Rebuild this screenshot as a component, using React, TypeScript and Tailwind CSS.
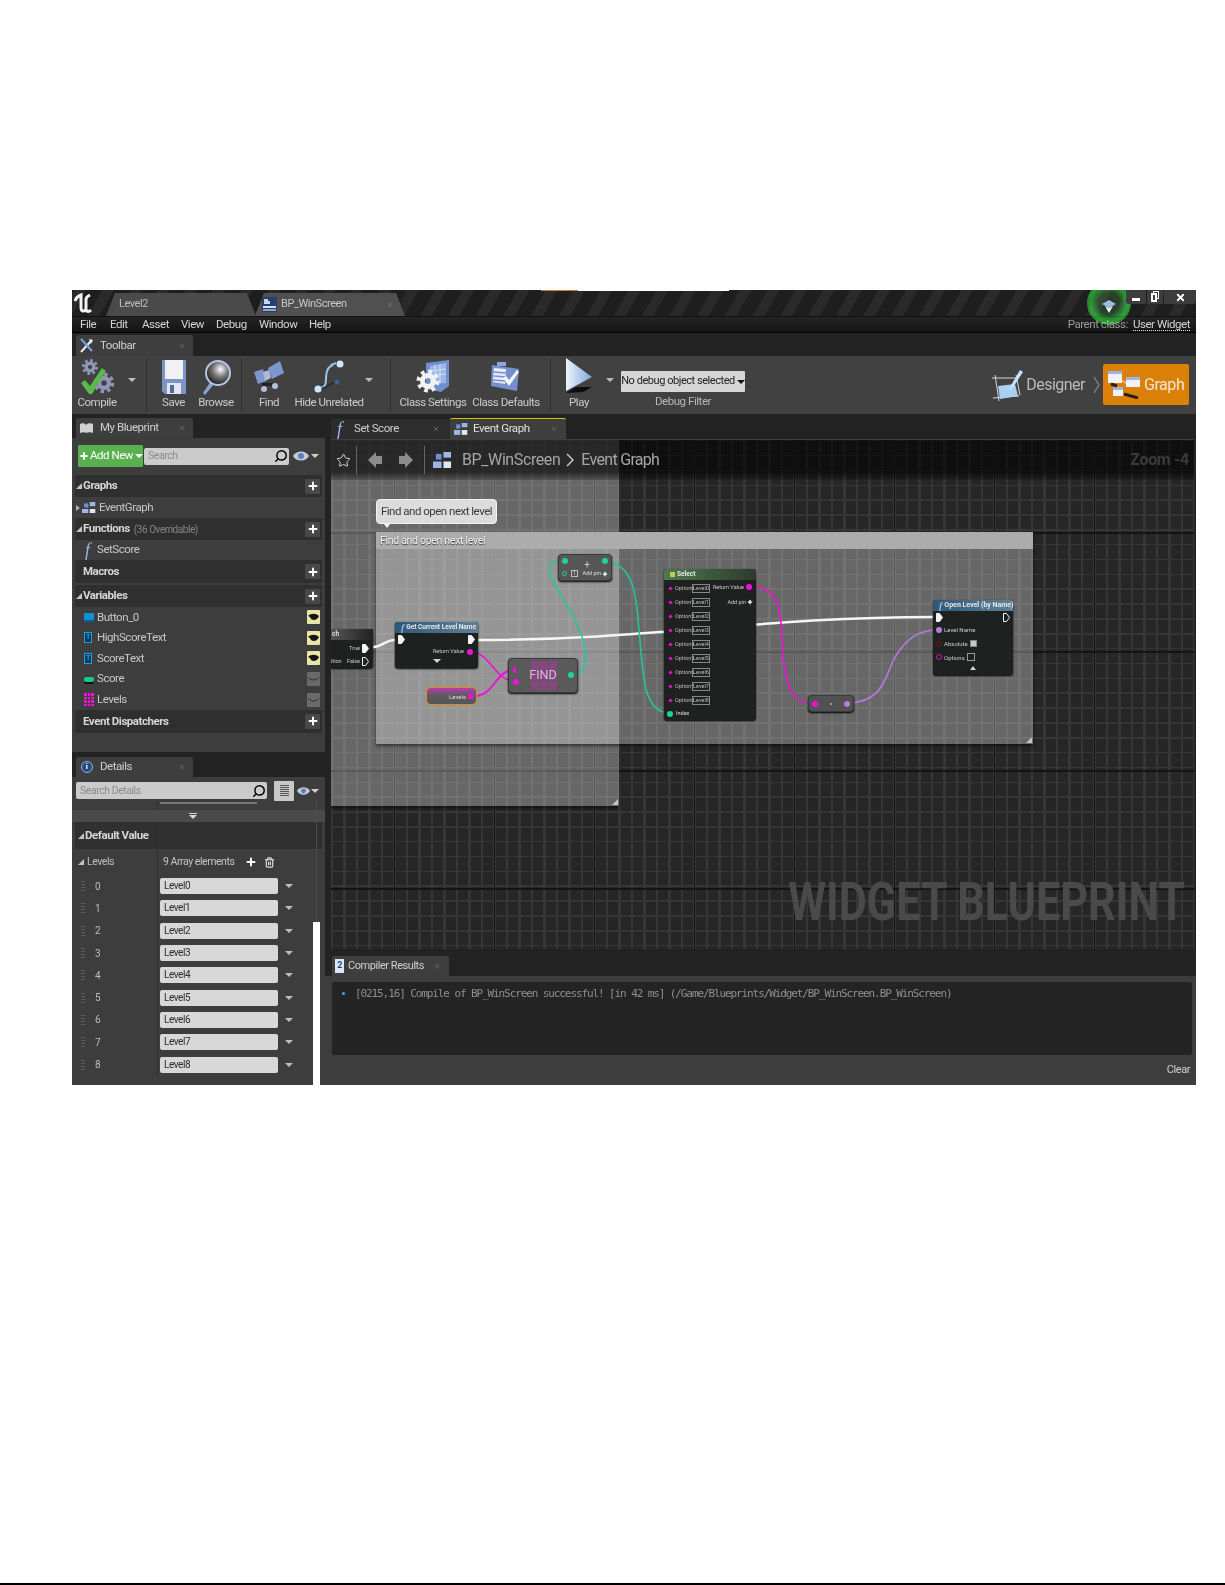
import { Star, Trash2, Search, X, Plus } from 'lucide-react';

function Gear({ cx, cy, r, fill }: { cx: number; cy: number; r: number; fill: string }) {
  const c = 2 * Math.PI * (r * 0.95);
  return (
    <g>
      <circle cx={cx} cy={cy} r={r * 0.95} fill="none" stroke={fill} strokeWidth={r * 0.4} strokeDasharray={`${c / 16} ${c / 16}`} />
      <circle cx={cx} cy={cy} r={r * 0.55} fill="none" stroke={fill} strokeWidth={r * 0.5} />
    </g>
  );
}

function UeLogo() {
  return (
    <svg width="18" height="22" viewBox="0 0 18 22" fill="none" stroke="#f4f4f4" strokeWidth="3">
      <path d="M1 8C2 5 4 3 7 2V15C7 18 9 19 12 17" />
      <path d="M16 2C14 3 12 4 12 6V17C13 19 15 19 17 17" />
    </svg>
  );
}

function WinIcon() {
  return (
    <svg width="15" height="15" viewBox="0 0 15 15">
      <rect width="15" height="15" fill="#26406e" />
      <rect x="1" y="9" width="13" height="2" fill="#d8e0ee" />
      <rect x="1" y="12" width="13" height="2" fill="#8aa4d0" />
      <path d="M2 2h4v2h2v3H2z" fill="#cdd6e6" />
    </svg>
  );
}

function Wrench() {
  return (
    <svg width="15" height="15" viewBox="0 0 15 15" fill="none">
      <path d="M2 14 12 3" stroke="#e8eef8" strokeWidth="2" />
      <path d="M2 1l11 12" stroke="#7fa5dc" strokeWidth="2" />
      <path d="M10 1l4 1-2 4z" fill="#e8eef8" />
    </svg>
  );
}

function CompileIcon() {
  return (
    <svg width="36" height="38" viewBox="0 0 36 38">
      <Gear cx={11} cy={9} r={7} fill="#8f96b6" />
      <Gear cx={25} cy={25} r={9} fill="#8f96b6" />
      <path d="M2 25l4-3 5 6L23 10l4 3-14 23h-3z" fill="#58b84e" />
    </svg>
  );
}

function SaveIcon() {
  return (
    <svg width="26" height="36" viewBox="0 0 26 36">
      <path d="M1 1h24v34H4l-3-3z" fill="#7d94c8" />
      <rect x="4" y="1" width="18" height="19" fill="#f1f1f4" />
      <rect x="6" y="24" width="14" height="11" fill="#e4e6ee" />
      <rect x="9" y="26" width="4" height="8" fill="#5a6a94" />
    </svg>
  );
}

function BrowseIcon() {
  return (
    <svg width="30" height="36" viewBox="0 0 30 36">
      <defs>
        <radialGradient id="lens" cx="0.6" cy="0.35" r="0.7">
          <stop offset="0" stopColor="#ffffff" />
          <stop offset="0.45" stopColor="#777777" />
          <stop offset="1" stopColor="#111111" />
        </radialGradient>
      </defs>
      <path d="M2 34l8-12 3 3-9 11z" fill="#8ba3d4" />
      <circle cx="17" cy="14" r="12" fill="url(#lens)" stroke="#b6c6e6" strokeWidth="2" />
    </svg>
  );
}

function FindIcon() {
  return (
    <svg width="32" height="34" viewBox="0 0 32 34">
      <path d="M1 12l9-3 3 12-8 3zM15 8l12-7 4 12-12 6z" fill="#7c97d0" />
      <path d="M10 12l6-2 2 8-6 3z" fill="#aebbd8" />
      <rect x="9" y="23" width="14" height="3" fill="#222" />
      <circle cx="11" cy="29" r="3" fill="#b4bfd8" />
      <circle cx="22" cy="26" r="3" fill="#b4bfd8" />
    </svg>
  );
}

function HideIcon() {
  return (
    <svg width="32" height="34" viewBox="0 0 32 34" fill="none">
      <path d="M6 28c6 0 7-3 7-10 0-8 3-13 10-15" stroke="#9dc4e4" strokeWidth="2" />
      <path d="M7 29c8-1 9-6 17-7" stroke="#2b2f38" strokeWidth="2" />
      <circle cx="27" cy="4" r="3.5" fill="#cfe6fa" />
      <circle cx="5" cy="29" r="3.5" fill="#cfe6fa" />
      <circle cx="24" cy="22" r="2.5" fill="#3f5f8e" />
      <path d="M17 6l2-3 1 4z" fill="#9dc4e4" />
    </svg>
  );
}

function ClassSettingsIcon() {
  return (
    <svg width="34" height="34" viewBox="0 0 34 34">
      <path d="M10 3l23-3v26l-8 6-15-3z" fill="#6f8fd0" />
      <path d="M14 6l16-3v20l-16 1z" fill="#9db6e6" />
      <path d="M19 5v18M24 4v19M14 11l16-2M14 16l16-2" stroke="#dfe8f8" strokeWidth="0.8" />
      <Gear cx={12} cy={21} r={10} fill="#f2f2f2" />
    </svg>
  );
}

function ClassDefaultsIcon() {
  return (
    <svg width="30" height="32" viewBox="0 0 30 32">
      <path d="M1 4l27 4-2 22L0 25z" fill="#7590cc" />
      <path d="M3 7l12 1-1 15-12-2z" fill="#e9ecf4" />
      <path d="M3 11l12 1M3 15l12 1M2 19l12 1" stroke="#7590cc" strokeWidth="1.4" />
      <rect x="6" y="1" width="9" height="4" fill="#8ea6d8" />
      <path d="M12 17l3-2 3 4 8-10 2 2-10 14z" fill="#f5f5f5" />
    </svg>
  );
}

function PlayIcon() {
  return (
    <svg width="28" height="38" viewBox="0 0 28 38">
      <defs>
        <linearGradient id="play" x1="0" y1="0" x2="1" y2="0">
          <stop offset="0" stopColor="#eef4fc" />
          <stop offset="1" stopColor="#7fa6dc" />
        </linearGradient>
      </defs>
      <path d="M1 0l26 19L1 33z" fill="url(#play)" />
      <path d="M1 35l10-6h16l-9 5z" fill="#0d0d0d" />
    </svg>
  );
}

function DesignerIcon() {
  return (
    <svg width="32" height="36" viewBox="0 0 32 36" fill="none">
      <path d="M1 11l24 0M4 8l4 26M2 31l26-2M25 8l4 20" stroke="#d8d8d8" strokeWidth="1" />
      <path d="M7 19l17-2 3 12-18 3z" fill="#a9d0f2" />
      <path d="M19 20L29 3l3 2-11 17-4 1z" fill="#c8e2fb" />
    </svg>
  );
}

function GraphIcon() {
  return (
    <svg width="34" height="28" viewBox="0 0 34 28">
      <path d="M12 8l7 5M10 18l3 4" stroke="#e6e6e6" strokeWidth="1" />
      <rect x="0" y="0" width="14" height="12" fill="#f0f3fa" />
      <rect x="0" y="0" width="14" height="3" fill="#9db6e6" />
      <rect x="18" y="6" width="14" height="10" fill="#f0f3fa" />
      <rect x="18" y="6" width="14" height="3" fill="#9db6e6" />
      <rect x="5" y="16" width="10" height="9" fill="#f0f3fa" />
      <rect x="5" y="16" width="10" height="3" fill="#9db6e6" />
      <path d="M3 13l6 2M16 23l14 4" stroke="#2a2018" strokeWidth="3" />
    </svg>
  );
}

function GraphGlyph({ size = 14 }: { size?: number }) {
  return (
    <svg width={size} height={size * 0.85} viewBox="0 0 20 17" fill="#9db6e6">
      <rect x="0" y="10" width="9" height="7" />
      <rect x="11" y="0" width="8" height="6" />
      <rect x="11" y="10" width="8" height="7" fill="#dfe8f8" />
      <rect x="3" y="2" width="6" height="6" fill="#6f8fd0" />
    </svg>
  );
}

function FnGlyph({ cls }: { cls: string }) {
  return <span className={`[font-family:'Liberation_Serif',serif] italic text-[#9db6e6] ${cls}`}>f</span>;
}

function Caret({ cls = 'border-t-[#bdbdbd]' }: { cls?: string }) {
  return <span className={`inline-block w-0 h-0 border-x-[4px] border-x-transparent border-t-[4px] ${cls}`} />;
}

function Corner() {
  return <span className="inline-block w-0 h-0 border-l-[6px] border-l-transparent border-b-[6px] border-b-[#c4c4c4]" />;
}

function Eye({ small }: { small?: boolean }) {
  return (
    <svg width={small ? 13 : 16} height="10" viewBox="0 0 16 10">
      <path d="M0 5c3-6 13-6 16 0-3 6-13 6-16 0z" fill="#c4cad6" />
      <circle cx="8" cy="5" r="3" fill="#5d7fc0" />
    </svg>
  );
}

function PanelTab({ icon, label, cls }: { icon: React.ReactNode; label: string; cls: string }) {
  return (
    <div className={`flex items-center bg-[#3e3e3e] rounded-t-[2px] text-[11.5px] text-[#cfcfcf] ${cls}`}>
      <span className="flex w-[17px] justify-center">{icon}</span>
      <span className="ml-[5px] flex-1">{label}</span>
      <X className="w-[8px] h-[8px] mr-[7px] text-[#5f5f5f]" strokeWidth={3} />
    </div>
  );
}

function ToolItem({ icon, label, cls }: { icon: React.ReactNode; label: string; cls: string }) {
  return (
    <div className={`flex flex-col items-center h-full pt-[2px] ${cls}`}>
      <div className="h-[37px] flex items-center justify-center">{icon}</div>
      <div className="text-[11.5px] leading-[14px] whitespace-nowrap text-[#cbcbcb]">{label}</div>
    </div>
  );
}

function ToolCaret({ cls }: { cls: string }) {
  return (
    <div className={`flex items-center justify-center h-full pb-[10px] ${cls}`}>
      <Caret />
    </div>
  );
}

function ToolSep({ cls }: { cls: string }) {
  return <div className={`w-[1px] h-[54px] self-center bg-[#2e2e2e] ${cls}`} />;
}

function SectionHead({ label, sub, arrow = true, cls }: { label: string; sub?: string; arrow?: boolean; cls: string }) {
  return (
    <div className={`flex items-center bg-[#2f2f2f] mx-[3px] pl-[1px] pr-[2px] ${cls}`}>
      {arrow ? <Corner /> : <span className="w-[6px]" />}
      <span className="ml-[1px] text-[11.5px] font-bold text-[#d6d6d6]">{label}</span>
      {sub && <span className="ml-[4px] text-[10px] text-[#858585]">{sub}</span>}
      <span className="ml-auto flex items-center justify-center w-[15px] h-[15px] bg-[#484848] rounded-[1px]">
        <Plus className="w-[12px] h-[12px] text-white" strokeWidth={4} />
      </span>
    </div>
  );
}

function VarRow({ icon, label, on }: { icon: React.ReactNode; label: string; on: boolean }) {
  return (
    <div className="flex items-center h-[20.6px] pl-[12px] pr-[5px] text-[11.5px] text-[#c8c8c8]">
      <span className="flex w-[13px] justify-start">{icon}</span>
      <span>{label}</span>
      {on ? (
        <span className="ml-auto flex items-center justify-center w-[13px] h-[14px] bg-[#e9e5a6] rounded-[1px]">
          <svg width="11" height="8" viewBox="0 0 11 8">
            <path d="M0 3c3-3 8-3 11 0-2 5-8 5-9 1z" fill="#151515" />
          </svg>
        </span>
      ) : (
        <span className="ml-auto flex items-center justify-center w-[13px] h-[14px] bg-[#6a6a6a] rounded-[1px]">
          <svg width="11" height="6" viewBox="0 0 11 6" fill="none">
            <path d="M0 1c3 4 8 4 11 0" stroke="#2b2b2b" strokeWidth="1" />
          </svg>
        </span>
      )}
    </div>
  );
}

const levels = ['0', '1', '2', '3', '4', '5', '6', '7', '8'];
const nineCells = [1, 2, 3, 4, 5, 6, 7, 8, 9];
const twelveCells = [1, 2, 3, 4, 5, 6, 7, 8, 9, 10, 11, 12];

function LevelRow({ n }: { n: string }) {
  return (
    <div className="flex h-[22.3px] items-center">
      <div className="flex w-[85px] items-center h-full">
        <span className="ml-[9px] w-[4px] h-[12px] [background-image:radial-gradient(#5c5c5c_0.6px,transparent_0.7px)] [background-size:2px_3px]" />
        <span className="ml-[10px] text-[10px] text-[#bdbdbd]">{n}</span>
      </div>
      <div className="flex items-center h-full border-l border-[#2e2e2e] pl-[2px]">
        <div className="w-[118px] h-[16px] bg-[#d8d8d8] rounded-[2px] pl-[4px] text-[10px] leading-[16px] text-[#2c2c2c]">Level{n}</div>
        <span className="ml-[7px] flex"><Caret /></span>
      </div>
    </div>
  );
}

function LeftPanel() {
  return (
    <div className="w-[253px] flex flex-col">
      <div className="h-[24px] flex items-end bg-[#232323] pl-[4px]">
        <PanelTab cls="w-[117px] h-[20px] pl-[2px]" label="My Blueprint" icon={
          <svg width="13" height="11" viewBox="0 0 13 11">
            <path d="M0 1c2-1 5-1 6 1 1-2 5-2 7-1v9c-2-1-5-1-7 0-1-1-4-1-6 0z" fill="#d0d0d0" />
          </svg>
        } />
      </div>
      <div className="h-[314px] bg-[#3d3d3d]">
        <div className="flex items-center h-[37px] pl-[6px] pb-[8px] pt-[7px]">
          <div className="flex items-center w-[65px] h-[22px] bg-[#58b04f] rounded-[1px] text-white text-[11.5px] whitespace-nowrap">
            <Plus className="w-[10px] h-[10px] ml-[1px]" strokeWidth={5} />
            <span className="ml-[1px]">Add New</span>
            <span className="ml-[2px] flex"><Caret cls="border-t-white" /></span>
          </div>
          <div className="ml-[1px] flex items-center w-[145px] h-[17px] bg-[#cbcbcb] rounded-[2px] pl-[4px] text-[10.5px] text-[#8b8b8b]">
            Search
            <Search className="ml-auto mr-[1px] w-[14px] h-[14px] text-black -scale-x-100" strokeWidth={2.5} />
          </div>
          <span className="ml-[4px] flex items-center gap-[2px]"><Eye /><Caret cls="border-t-[#d0d0d0]" /></span>
        </div>
        <SectionHead label="Graphs" cls="h-[22px]" />
        <div className="flex items-center h-[21px] pl-[4px] text-[11.5px] text-[#c8c8c8]">
          <span className="w-0 h-0 border-y-[3.5px] border-y-transparent border-l-[4px] border-l-[#b0b0b0]" />
          <span className="ml-[2px] flex"><GraphGlyph /></span>
          <span className="ml-[3px]">EventGraph</span>
        </div>
        <SectionHead label="Functions" sub="(36 Overridable)" cls="h-[22px]" />
        <div className="flex items-center h-[20px] pl-[13px] text-[11.5px] text-[#c8c8c8]">
          <FnGlyph cls="text-[18px] leading-none w-[12px]" />
          <span>SetScore</span>
        </div>
        <SectionHead label="Macros" arrow={false} cls="h-[23px]" />
        <SectionHead label="Variables" cls="h-[22px] mt-[2px]" />
        <VarRow on label="Button_0" icon={<span className="block w-[10px] h-[9px] bg-[#0f8fd8] border-b-2 border-[#0a5f90]" />} />
        <VarRow on label="HighScoreText" icon={<span className="flex items-center justify-center w-[8px] h-[11px] border border-[#19a0e8] text-[7px] font-bold leading-none text-[#19a0e8] bg-[#123a55]">T</span>} />
        <VarRow on label="ScoreText" icon={<span className="flex items-center justify-center w-[8px] h-[11px] border border-[#19a0e8] text-[7px] font-bold leading-none text-[#19a0e8] bg-[#123a55]">T</span>} />
        <VarRow on={false} label="Score" icon={<span className="block w-[10px] h-[5px] bg-[#19c88e] rounded-[2px] shadow-[0_2px_0_#111]" />} />
        <VarRow on={false} label="Levels" icon={
          <span className="grid grid-cols-3 gap-[1px] w-[10px]">
            {twelveCells.map((c) => (
              <span key={c} className="block h-[2.5px] bg-[#f010d8]" />
            ))}
          </span>
        } />
        <SectionHead label="Event Dispatchers" arrow={false} cls="h-[23px]" />
      </div>
      <div className="h-[25px] flex items-end bg-[#232323] pl-[4px]">
        <PanelTab cls="w-[117px] h-[20px] pl-[2px]" label="Details" icon={
          <span className="flex items-center justify-center w-[12px] h-[12px] rounded-full border border-[#8fb0ea] bg-[#2b4a80] text-[8px] font-bold text-white">i</span>
        } />
      </div>
      <div className="relative flex-1 bg-[#3d3d3d] overflow-hidden">
        <div className="flex items-center h-[25px] pl-[4px] pt-[5px] pb-[3px]">
          <div className="flex items-center w-[191px] h-[17px] bg-[#cbcbcb] rounded-[2px] pl-[4px] text-[10.5px] text-[#8b8b8b]">
            Search Details
            <Search className="ml-auto mr-[1px] w-[14px] h-[14px] text-black -scale-x-100" strokeWidth={2.5} />
          </div>
          <div className="ml-[7px] flex items-center justify-center w-[20px] h-[20px] bg-[#c8c8c8] rounded-[1px]">
            <span className="block w-[9px] h-[11px] [background-image:repeating-linear-gradient(#555_0,#555_1px,transparent_1px,transparent_2px)]" />
          </div>
          <span className="ml-[3px] flex items-center gap-[1px]"><Eye small /><Caret cls="border-t-[#d0d0d0]" /></span>
        </div>
        <div className="h-[20px] flex flex-col">
          <div className="h-[8px] ml-[85px] border-l border-[#2e2e2e]">
            <div className="w-[97px] h-[2px] ml-[2px] bg-[#777777]" />
          </div>
          <div className="h-[12px] bg-[#4a4a4a] flex items-center justify-center pr-[11px]">
            <div className="flex flex-col items-center">
              <span className="block w-[8px] h-[1px] bg-[#d8d8d8] mb-[1px]" />
              <Caret cls="border-t-[#d8d8d8]" />
            </div>
          </div>
        </div>
        <div className="flex h-[27px] mx-[3px] bg-[#303030] items-center">
          <div className="w-[82px] flex items-center pl-[3px] h-full border-r border-[#262626]">
            <Corner />
            <span className="ml-[1px] text-[11.5px] font-bold text-[#d6d6d6] whitespace-nowrap">Default Value</span>
          </div>
        </div>
        <div className="flex h-[26px] items-center">
          <div className="w-[85px] pl-[6px] flex items-center text-[10.5px] text-[#bdbdbd] h-full">
            <Corner />
            <span className="ml-[3px]">Levels</span>
          </div>
          <div className="flex items-center border-l border-[#2e2e2e] h-full pl-[5px] text-[10.5px] text-[#c4c4c4]">
            9 Array elements
            <Plus className="ml-[11px] w-[12px] h-[12px] text-white" strokeWidth={4} />
            <Trash2 className="ml-[7px] w-[11px] h-[11px] text-[#e0e0e0]" strokeWidth={2.5} />
          </div>
        </div>
        {levels.map((n) => (
          <LevelRow key={n} n={n} />
        ))}
        <div className="absolute right-[5px] top-[145px] bottom-0 w-[7px] bg-white" />
        <div className="absolute right-[8px] top-[23px] h-[122px] w-[1px] bg-[#4c4c4c]" />
      </div>
    </div>
  );
}

function Pin({ cls }: { cls: string }) {
  return <span className={`block w-[6px] h-[6px] rounded-full ${cls}`} />;
}

function ExecPin({ filled = true }: { filled?: boolean }) {
  return (
    <svg width="7" height="9" viewBox="0 0 7 9">
      <path d="M0.5 0.5h3l3 4-3 4h-3z" fill={filled ? '#f4f4f4' : 'none'} stroke="#f4f4f4" strokeWidth="1" />
    </svg>
  );
}

function NodeHead({ label, cls, glyph }: { label: string; cls: string; glyph: React.ReactNode }) {
  return (
    <div className={`flex items-center h-[11px] rounded-t-[3px] pl-[6px] text-[6.5px] font-bold text-[#e8e8e8] ${cls}`}>
      {glyph}
      <span className="ml-[2px] whitespace-nowrap">{label}</span>
    </div>
  );
}

const options = ['0', '1', '2', '3', '4', '5', '6', '7', '8'];

function GraphCanvas() {
  return (
    <div className="relative h-[509px] overflow-hidden bg-[#262626] tracking-normal [background-image:repeating-linear-gradient(90deg,transparent_0,transparent_63px,#141414_63px,#141414_64px,transparent_64px,transparent_100px),repeating-linear-gradient(transparent_0,transparent_92px,#141414_92px,#141414_94px,transparent_94px,transparent_118.8px),repeating-linear-gradient(90deg,#363636_0,#363636_2px,transparent_2px,transparent_12.5px),repeating-linear-gradient(#363636_0,#363636_1.5px,transparent_1.5px,transparent_14.85px)]">
      {/* comment boxes */}
      <div className="absolute left-0 top-0 w-[288px] h-[366px] bg-white/30 shadow-[0_2px_3px_rgba(0,0,0,0.6)]">
        <span className="absolute right-[1px] bottom-[1px] flex"><Corner /></span>
      </div>
      <div className="absolute left-[45px] top-[92px] w-[657px] h-[212px] bg-white/30 shadow-[0_2px_3px_rgba(0,0,0,0.5)]">
        <div className="h-[17px] bg-[#acacac] pl-[4px] text-[10.5px] tracking-[-0.3px] leading-[17px] text-[#f4f4f4] [text-shadow:0_1px_1px_#333]">Find and open next level</div>
        <span className="absolute right-[1px] bottom-[1px] flex"><Corner /></span>
      </div>
      <div className="absolute left-[45px] top-[59px] w-[121px] h-[25px] rounded-[4px] border border-[#f2f2f2] bg-[#dcdcdc] text-center text-[11.5px] tracking-[-0.5px] leading-[23px] text-[#3a3a3a] whitespace-nowrap">
        Find and open next level
        <span className="absolute left-[6px] top-[23px] w-0 h-0 border-x-[4px] border-x-transparent border-t-[5px] border-t-[#efefef]" />
      </div>

      {/* wires */}
      <svg className="absolute left-0 top-0" width="863" height="509" viewBox="331 440 863 509" fill="none">
        <path d="M373 647C382 647 385 640 395 640" stroke="#f6f6f6" strokeWidth="2.5" />
        <path d="M478 640C650 640 760 617 933 617" stroke="#f6f6f6" strokeWidth="2.5" />
        <path d="M471 652C490 652 495 681 514 681" stroke="#f010d8" strokeWidth="1.6" />
        <path d="M474 696C495 696 495 670 514 670" stroke="#f010d8" strokeWidth="2" />
        <path d="M571 675C590 675 590 650 575 620C560 590 548 580 550 567C551 560 558 560 564 560" stroke="#1fc9a0" strokeWidth="1.5" />
        <path d="M604 560C640 565 636 610 640 640C643 680 645 713 670 713" stroke="#1fc9a0" strokeWidth="1.5" />
        <path d="M756 587C790 590 778 640 785 670C790 700 800 703 813 703" stroke="#f010d8" strokeWidth="1.6" />
        <path d="M847 703C890 703 885 665 900 650C910 635 925 630 938 630" stroke="#b77ae0" strokeWidth="1.6" />
      </svg>

      {/* branch node, cut by the canvas edge */}
      <div className="absolute left-0 top-[189px] w-[42px] h-[39px] bg-[#1d211f] rounded-r-[3px] shadow-[0_1px_2px_#000]">
        <div className="h-[11px] bg-[linear-gradient(90deg,#555,#222)] pl-[1px] text-[6.5px] font-bold leading-[11px] text-[#ddd]">ch</div>
        <div className="flex items-center justify-end h-[14px] pr-[4px] mt-[1px] text-[5.5px] text-[#ccc] gap-[2px]">True <ExecPin /></div>
        <div className="flex items-center justify-between h-[12px] pr-[4px] text-[5.5px] text-[#ccc]"><span>ition</span><span className="flex items-center gap-[2px]">False <ExecPin filled={false} /></span></div>
      </div>

      {/* Get Current Level Name */}
      <div className="absolute left-[64px] top-[182px] w-[83px] h-[46px] bg-[#1d211f] rounded-[3px] shadow-[0_1px_2px_#000]">
        <NodeHead label="Get Current Level Name" cls="bg-[linear-gradient(90deg,#2e5877,#5d8199)]" glyph={<FnGlyph cls="text-[10px] leading-none" />} />
        <div className="flex justify-between items-center h-[12px] px-[3px]"><ExecPin /><ExecPin /></div>
        <div className="flex justify-end items-center gap-[3px] h-[11px] pr-[5px] mt-[1px] text-[5.5px] text-[#ccc]">Return Value <Pin cls="bg-[#f010d8]" /></div>
        <div className="flex justify-center h-[8px] pl-[1px] items-center"><Caret cls="border-t-[#d4d4d4]" /></div>
      </div>

      {/* Levels variable */}
      <div className="absolute left-[95px] top-[247px] w-[51px] h-[18px] rounded-[5px] border border-[#df8a10] bg-[linear-gradient(#c436b4,#5c5c5c_45%,#555)] flex items-center justify-end pr-[3px] gap-[2px] text-[6px] text-[#ddd]">
        Levels <span className="w-[5px] h-[5px] bg-[#f010d8]" />
      </div>

      {/* FIND */}
      <div className="absolute left-[177px] top-[218px] w-[70px] h-[35px] rounded-[4px] bg-[#5a5a5a] border border-[#3a3a3a] shadow-[0_1px_2px_#000]">
        <div className="absolute left-[22px] top-[2px] w-[26px] grid grid-cols-3 gap-[1px]">
          {nineCells.map((c) => (
            <span key={c} className="block h-[9px] bg-[#86467f]" />
          ))}
        </div>
        <div className="absolute inset-0 flex items-center justify-center text-[12.5px] text-[#dcb8d8]">FIND</div>
        <span className="absolute left-[4px] top-[8px] w-[3px] h-[6px] bg-[#f010d8]" />
        <span className="absolute left-[4px] top-[20px]"><Pin cls="w-[5px] h-[5px] bg-[#f010d8]" /></span>
        <span className="absolute right-[3px] top-[13px]"><Pin cls="bg-[#1fd1a0]" /></span>
      </div>

      {/* add node */}
      <div className="absolute left-[227px] top-[114px] w-[54px] h-[27px] rounded-[4px] bg-[#565656] border border-[#3a3a3a] shadow-[0_1px_2px_#000]">
        <div className="flex justify-between h-[12px] items-center px-[3px]">
          <Pin cls="w-[5px] h-[5px] bg-[#1fd1a0]" />
          <span className="text-[10px] leading-[10px] mt-[8px] ml-[4px] text-[#c8c8c8]">+</span>
          <Pin cls="w-[5px] h-[5px] bg-[#1fd1a0]" />
        </div>
        <div className="flex items-center h-[13px] px-[3px]">
          <span className="w-[5px] h-[5px] rounded-full border border-[#1fd1a0]" />
          <span className="ml-[4px] w-[7px] h-[7px] border border-[#bbb] text-[5px] leading-[5px] text-center text-[#ccc]">1</span>
          <span className="ml-auto text-[5.5px] text-[#ddd]">Add pin</span>
          <Plus className="w-[6px] h-[6px] ml-[1px] text-white" strokeWidth={5} />
        </div>
      </div>

      {/* Select */}
      <div className="absolute left-[333px] top-[129px] w-[92px] h-[151px] bg-[#1e211f] rounded-[3px] shadow-[0_1px_2px_#000]">
        <NodeHead label="Select" cls="bg-[linear-gradient(90deg,#4d7a4d,#2d3a2d)]" glyph={<span className="w-[5px] h-[5px] bg-[#c8c84a]" />} />
        <div className="relative pt-[1px]">
          {options.map((n) => (
            <div key={n} className="flex items-center h-[14px] pl-[5px] text-[5.5px] text-[#bbb]">
              <span className="w-[3px] h-[3px] rotate-45 bg-[#f010d8]" />
              <span className="ml-[3px] w-[15px]">Option{n}</span>
              <span className="ml-[2px] w-[18px] h-[9px] border border-[#888] text-center leading-[7px] text-[#bbb]">Level{n}</span>
            </div>
          ))}
          <div className="flex items-center h-[13px] pl-[3px] text-[5.5px] text-[#ddd]">
            <Pin cls="bg-[#1fd1a0]" />
            <span className="ml-[3px]">Index</span>
          </div>
          <div className="absolute right-[4px] top-[1px] flex items-center gap-[2px] h-[12px] text-[5.5px] text-[#ccc]">Return Value <Pin cls="w-[4px] h-[4px] bg-[#f010d8]" /></div>
          <div className="absolute right-[3px] top-[15px] flex items-center gap-[1px] h-[14px] text-[5.5px] text-[#ccc]">Add pin <Plus className="w-[6px] h-[6px] text-white" strokeWidth={5} /></div>
        </div>
      </div>

      {/* convert */}
      <div className="absolute left-[477px] top-[255px] w-[46px] h-[17px] rounded-[4px] bg-[#515151] border border-[#3a3a3a] shadow-[0_1px_2px_#000] flex items-center justify-between px-[3px]">
        <Pin cls="w-[5px] h-[5px] bg-[#f010d8]" />
        <span className="w-[2px] h-[2px] bg-[#bbb] rounded-full" />
        <Pin cls="w-[5px] h-[5px] bg-[#b77ae0]" />
      </div>

      {/* Open Level */}
      <div className="absolute left-[602px] top-[160px] w-[80px] h-[75px] bg-[#1d211f] rounded-[3px] shadow-[0_1px_2px_#000]">
        <NodeHead label="Open Level (by Name)" cls="bg-[linear-gradient(90deg,#2e5877,#5d8199)] text-[7px]" glyph={<FnGlyph cls="text-[10px] leading-none" />} />
        <div className="flex justify-between items-center h-[12px] px-[3px]"><ExecPin /><ExecPin filled={false} /></div>
        <div className="flex items-center h-[13.7px] pl-[3px] text-[6px] text-[#ccc]"><Pin cls="bg-[#b77ae0]" /><span className="ml-[2px]">Level Name</span></div>
        <div className="flex items-center h-[13.7px] pl-[3px] text-[6px] text-[#ccc]"><span className="w-[6px] h-[6px] rounded-full border border-[#7a1010]" /><span className="ml-[2px]">Absolute</span><span className="ml-[2px] w-[7px] h-[7px] bg-[#c8c8c8] border border-[#888]" /></div>
        <div className="flex items-center h-[13.7px] pl-[3px] text-[6px] text-[#ccc]"><span className="w-[6px] h-[6px] rounded-full border border-[#d018b8]" /><span className="ml-[2px]">Options</span><span className="ml-[2px] w-[8px] h-[8px] border border-[#999]" /></div>
        <div className="flex justify-center items-center h-[8px]"><span className="w-0 h-0 border-x-[3px] border-x-transparent border-b-[4px] border-b-[#d4d4d4]" /></div>
      </div>

      {/* breadcrumb */}
      <div className="absolute left-0 right-0 top-0 h-[40px] bg-[linear-gradient(rgba(0,0,0,0.62),rgba(0,0,0,0.62)_80%,rgba(0,0,0,0.2))] flex items-center text-[#a6a6a6]">
        <div className="flex items-center w-[26px] justify-center h-[28px] border-r border-[#666]">
          <Star className="w-[15px] h-[15px] text-[#d8d8d8]" strokeWidth={1.6} />
        </div>
        <div className="flex items-center h-[28px] w-[68px] border-r border-[#666] justify-around px-[3px]">
          <svg width="14" height="16" viewBox="0 0 14 16"><path d="M8 0L0 8l8 8v-4h6V4H8z" fill="#8c8c8c" /></svg>
          <svg width="14" height="16" viewBox="0 0 14 16"><path d="M6 0l8 8-8 8v-4H0V4h6z" fill="#8c8c8c" /></svg>
        </div>
        <span className="ml-[8px] flex"><GraphGlyph size={19} /></span>
        <span className="ml-[10px] text-[16px] tracking-[-0.4px]">BP_WinScreen</span>
        <span className="ml-[6px] text-[#d0d0d0]">
          <svg width="8" height="14" viewBox="0 0 8 14" fill="none"><path d="M1 1l6 6-6 6" stroke="currentColor" strokeWidth="1.4" /></svg>
        </span>
        <span className="ml-[7px] text-[16px] tracking-[-0.7px]">Event Graph</span>
        <span className="ml-auto mr-[5px] text-[16px] tracking-[-0.3px] font-bold text-[#3b3b3b]">Zoom -4</span>
      </div>

      <div className="absolute right-[9px] top-[430px] text-[54px] leading-[64px] font-bold text-[#4a4a4a] whitespace-nowrap origin-right scale-x-[0.8]">WIDGET BLUEPRINT</div>
    </div>
  );
}

function RightPanel() {
  return (
    <div className="flex-1 flex flex-col pl-[5px]">
      <div className="h-[25px] flex items-end bg-[#232323] -ml-[5px] pl-[6px]">
        <div className="flex items-center w-[119px] h-[20px] bg-[#2d2d2d] rounded-t-[2px] text-[11.5px] text-[#cfcfcf] pl-[6px]">
          <FnGlyph cls="text-[18px] leading-none w-[10px]" />
          <span className="ml-[7px] flex-1">Set Score</span>
          <X className="w-[8px] h-[8px] mr-[10px] text-[#5f5f5f]" strokeWidth={3} />
        </div>
        <div className="flex items-center w-[116px] h-[21px] bg-[#3e3e3e] border-t border-[#d6c600] rounded-t-[2px] text-[11.5px] text-[#e0e0e0] pl-[4px]">
          <GraphGlyph />
          <span className="ml-[5px] flex-1">Event Graph</span>
          <X className="w-[8px] h-[8px] mr-[8px] text-[#5f5f5f]" strokeWidth={3} />
        </div>
      </div>
      <div className="mr-[2px] ml-[1px] border-t-[1px] border-[#3e3e3e]">
        <GraphCanvas />
      </div>
      <div className="h-[7px] bg-[#232323] -ml-[5px]" />
      <div className="h-[20px] flex bg-[#232323] -ml-[5px] pl-[7px]">
        <div className="flex items-center w-[117px] h-[20px] bg-[#3e3e3e] rounded-t-[2px] text-[11px] text-[#cfcfcf] pl-[3px]">
          <span className="flex items-center justify-center w-[9px] h-[14px] bg-[#dbe6f8] text-[9px] font-bold text-[#24407a]">2</span>
          <span className="ml-[4px] flex-1 whitespace-nowrap">Compiler Results</span>
          <X className="w-[8px] h-[8px] mr-[8px] text-[#5f5f5f]" strokeWidth={3} />
        </div>
      </div>
      <div className="flex-1 bg-[#3d3d3d] flex flex-col -ml-[5px] pl-[7px] pr-[4px] pt-[6px]">
        <div className="h-[73px] bg-[#242424] rounded-[2px] pl-[10px] pt-[5px] flex items-start">
          <span className="mt-[5px] w-[3px] h-[3px] rounded-full bg-[#4aa8e8]" />
          <span className="ml-[10px] [font-family:'DejaVu_Sans_Mono',monospace] text-[11px] tracking-[-1.1px] leading-[14px] text-[#8f8f8f] whitespace-nowrap">[0215,16] Compile of BP_WinScreen successful! [in 42 ms] (/Game/Blueprints/Widget/BP_WinScreen.BP_WinScreen)</span>
        </div>
        <div className="flex-1 flex items-center justify-end pr-[2px] text-[11px] text-[#cfcfcf]">Clear</div>
      </div>
    </div>
  );
}

export default function App() {
  return (
    <div className="w-[1225px] h-[1585px] bg-white flex flex-col justify-between [font-family:Roboto,sans-serif]">
      <div className="pt-[290px] pl-[72px]">
        <div className="relative w-[1124px] h-[795px] bg-[#232323] flex flex-col overflow-hidden tracking-[-0.45px]">
          {/* title bar */}
          <div className="h-[26px] flex items-end pl-[34px] [background-image:repeating-linear-gradient(-60deg,#1e1e1e_0,#1e1e1e_14px,#2a2a2a_14px,#2a2a2a_24px)]">
            <div className="absolute left-[2px] top-[3px]"><UeLogo /></div>
            <div className="flex items-center w-[150px] h-[23px] bg-[#4a4a4a] text-[11px] text-[#bdbdbd] pl-[13px] [clip-path:polygon(6%_0,94%_0,100%_100%,0_100%)]">Level2</div>
            <div className="flex items-center w-[150px] h-[23px] -ml-[1px] bg-[#505050] text-[11px] text-[#c8c8c8] pl-[7px] [clip-path:polygon(6%_0,94%_0,100%_100%,0_100%)]">
              <WinIcon />
              <span className="ml-[4px] flex-1">BP_WinScreen</span>
              <X className="w-[8px] h-[8px] mr-[11px] text-[#707070]" strokeWidth={3} />
            </div>
          </div>
          {/* menu */}
          <div className="h-[17px] flex items-center bg-[linear-gradient(#242424,#141414)] border-b border-black border-t border-t-[#111] pl-[8px] text-[11.5px] text-[#d4d4d4]">
            <span className="w-[30px]">File</span>
            <span className="w-[32px]">Edit</span>
            <span className="w-[39px]">Asset</span>
            <span className="w-[35px]">View</span>
            <span className="w-[43px]">Debug</span>
            <span className="w-[50px]">Window</span>
            <span>Help</span>
            <span className="ml-auto mr-[5px] text-[#9a9a9a]">Parent class:</span>
            <span className="mr-[6px] text-[#d4d4d4] border-b border-dotted border-[#e0e0e0] leading-[12px]">User Widget</span>
          </div>
          {/* toolbar tab */}
          <div className="h-[23px] flex items-end bg-[#232323] pl-[4px]">
            <PanelTab cls="w-[117px] h-[21px] pl-[2px]" label="Toolbar" icon={<Wrench />} />
          </div>
          {/* toolbar */}
          <div className="h-[58px] flex items-stretch bg-[#414141]">
            <ToolItem cls="w-[50px]" label="Compile" icon={<CompileIcon />} />
            <ToolCaret cls="w-[20px]" />
            <ToolSep cls="ml-[4px]" />
            <ToolItem cls="w-[49px] ml-[2px]" label="Save" icon={<SaveIcon />} />
            <ToolItem cls="w-[36px]" label="Browse" icon={<BrowseIcon />} />
            <ToolSep cls="ml-[7px]" />
            <ToolItem cls="w-[50px] ml-[2px]" label="Find" icon={<FindIcon />} />
            <ToolItem cls="w-[64px] ml-[3px]" label="Hide Unrelated" icon={<HideIcon />} />
            <ToolCaret cls="w-[16px]" />
            <ToolSep cls="ml-[13px]" />
            <ToolItem cls="w-[62px] ml-[11px]" label="Class Settings" icon={<ClassSettingsIcon />} />
            <ToolItem cls="w-[62px] ml-[11px]" label="Class Defaults" icon={<ClassDefaultsIcon />} />
            <ToolSep cls="ml-[13px]" />
            <ToolItem cls="w-[38px] ml-[9px]" label="Play" icon={<PlayIcon />} />
            <ToolCaret cls="w-[10px] ml-[7px]" />
            <div className="ml-[6px] flex flex-col items-center pt-[15px] w-[124px]">
              <div className="flex items-center justify-center w-[124px] h-[21px] bg-[#d6d6d6] rounded-[1px] text-[11px] text-[#222] gap-[2px] whitespace-nowrap">
                No debug object selected <Caret cls="border-t-[#111]" />
              </div>
              <div className="mt-[1px] text-[11.5px] text-[#b8b8b8]">Debug Filter</div>
            </div>
            <div className="ml-auto flex items-center pr-[7px] pb-[1px]">
              <DesignerIcon />
              <span className="ml-[3px] text-[16px] tracking-[-0.5px] text-[#bcbcbc]">Designer</span>
              <svg className="ml-[8px]" width="7" height="18" viewBox="0 0 7 18" fill="none"><path d="M1 1l5 8-5 8" stroke="#8a8a8a" strokeWidth="1.2" /></svg>
              <div className="ml-[3px] flex items-center w-[86px] h-[41px] bg-[#db8109] rounded-[2px] pl-[5px] text-[16px] text-[#f0e6d8]">
                <GraphIcon />
                <span className="ml-[2px]">Graph</span>
              </div>
            </div>
          </div>
          {/* main */}
          <div className="flex-1 flex">
            <LeftPanel />
            <RightPanel />
          </div>
          {/* notification glow */}
          <div className="absolute left-[1015px] top-[-9px] flex items-center justify-center w-[44px] h-[44px] rounded-full mix-blend-screen bg-[radial-gradient(circle,#0a1a0a_0,#0a2a0a_35%,#0a8a14_58%,#0a6a12_80%,#0a4a0c_100%)]">
            <svg width="16" height="16" viewBox="0 0 16 16" className="mt-[7px]">
              <path d="M8 1l7 4-7 4-7-4z" fill="#8fb4e0" />
              <path d="M4 7l4 7 4-7-4 2z" fill="#e8eef8" />
            </svg>
          </div>
          {/* window buttons */}
          <div className="absolute right-0 top-0 flex h-[14px] gap-[1px]">
            <div className="flex items-end justify-center w-[20px] bg-[#3c3c3c] rounded-bl-[3px] pb-[3px]"><span className="block w-[8px] h-[3px] bg-white" /></div>
            <div className="relative flex items-center justify-center w-[16px] bg-[#3c3c3c]">
              <span className="absolute left-[6px] top-[1px] block w-[6px] h-[8px] border border-white" />
              <span className="absolute left-[4px] top-[3px] block w-[6px] h-[9px] border-2 border-white bg-[#3c3c3c]" />
            </div>
            <div className="flex items-center justify-center w-[32px] bg-[#3c3c3c] rounded-br-[3px]"><X className="w-[11px] h-[11px] text-white" strokeWidth={4} /></div>
          </div>
          {/* stray edge marks */}
          <div className="absolute left-[469px] top-0 w-[37px] h-[1px] bg-[#d9772b]" />
          <div className="absolute left-[506px] top-0 w-[151px] h-[1px] bg-white" />
        </div>
      </div>
      <div className="h-[2px] bg-black" />
    </div>
  );
}
